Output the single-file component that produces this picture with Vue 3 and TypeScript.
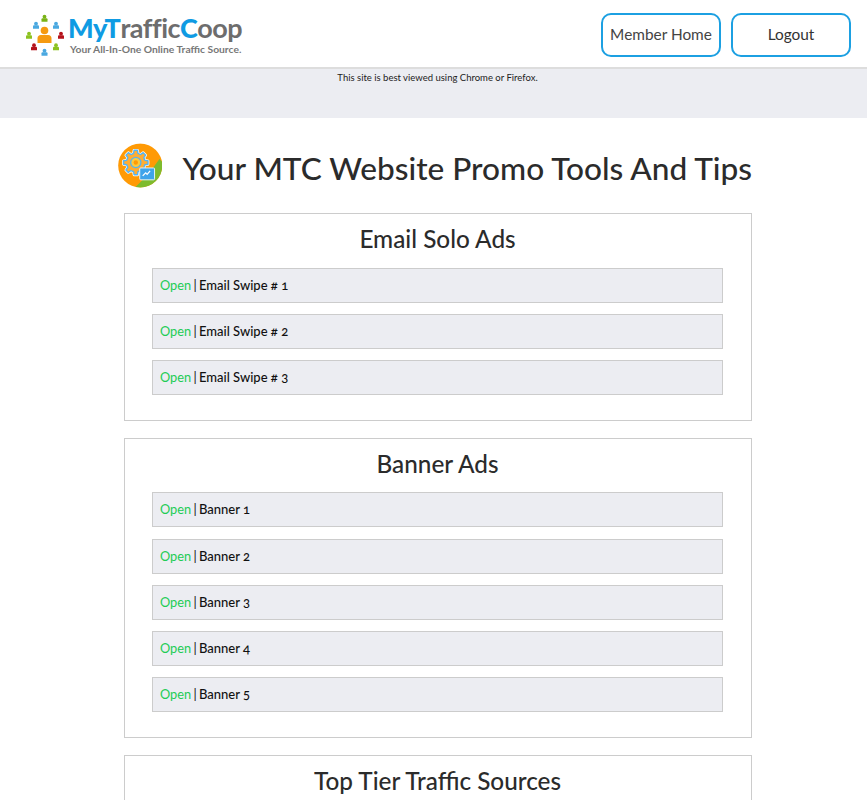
<script setup lang="ts">
interface Section {
  title: string
  items: string[]
}

const sections: Section[] = [
  { title: 'Email Solo Ads', items: ['Email Swipe # 1', 'Email Swipe # 2', 'Email Swipe # 3'] },
  { title: 'Banner Ads', items: ['Banner 1', 'Banner 2', 'Banner 3', 'Banner 4', 'Banner 5'] },
  { title: 'Top Tier Traffic Sources', items: [] },
]

// little people around the logo: x, y, colour
const people = [
  [44.5, 18.5, '#7ab317'], [56, 25.5, '#4aa8e0'], [36, 25.5, '#4aa8e0'],
  [29, 35.5, '#8cc21f'], [61, 35.5, '#b5121b'], [34, 47, '#b5121b'],
  [56, 47, '#8cc21f'], [44.5, 52.5, '#4aa8e0'],
] as [number, number, string][]

// outline of the eight-toothed gear in the heading icon
function gearPath(cx: number, cy: number, inner: number, outer: number, teeth: number) {
  const pts: string[] = []
  const step = (Math.PI * 2) / teeth
  for (let i = 0; i < teeth; i++) {
    const a = i * step
    const corners: [number, number][] = [
      [inner, a - step * 0.3], [outer, a - step * 0.18], [outer, a + step * 0.18], [inner, a + step * 0.3],
    ]
    for (const [r, t] of corners) {
      pts.push(`${(cx + r * Math.cos(t)).toFixed(2)} ${(cy + r * Math.sin(t)).toFixed(2)}`)
    }
  }
  return 'M' + pts.join('L') + 'Z'
}

const gear = gearPath(18, 19.5, 9.5, 12.5, 8)
</script>

<template>
  <div class="page">
    <header class="top">
      <div class="logo">
        <svg class="logo-icon" width="44" height="44" viewBox="24 14 44 44">
          <g v-for="(p, i) in people" :key="i" :fill="p[2]">
            <circle :cx="p[0]" :cy="p[1] - 1.8" r="1.9" />
            <path :d="`M${p[0] - 3} ${p[1] + 3.2}v-2.4q0-1 1-1h4q1 0 1 1v2.4z`" />
          </g>
          <circle cx="44.5" cy="30.5" r="3.8" fill="#f59a12" />
          <path d="M37.5 43v-4.5q0-3.6 3.4-3.6h7.2q3.4 0 3.4 3.6V43z" fill="#f59a12" />
        </svg>
        <div class="logo-text">
          <div class="logo-name"><b>My</b><b>T</b>raffic<b>C</b>oop</div>
          <div class="logo-tag">Your All-In-One Online Traffic Source.</div>
        </div>
      </div>
      <nav class="nav">
        <a class="btn">Member Home</a>
        <a class="btn dark">Logout</a>
      </nav>
    </header>

    <div class="notice">This site is best viewed using Chrome or Firefox.</div>

    <main class="main">
      <div class="heading">
        <svg class="heading-icon" width="45" height="45" viewBox="0 0 45 45">
          <defs>
            <clipPath id="disc"><circle cx="22.5" cy="22.5" r="22.3" /></clipPath>
          </defs>
          <g clip-path="url(#disc)">
            <rect width="45" height="45" fill="#ff9a05" />
            <path d="M17 45 30 32 42 16 46 20V46z" fill="#7dbb2e" />
          </g>
          <path :d="gear" fill="none" stroke="#fff" stroke-width="2.8" stroke-linejoin="round" />
          <path :d="gear" fill="#ffad33" stroke="#55b4f2" stroke-width="1.4" stroke-linejoin="round" />
          <circle cx="18" cy="19.5" r="5.2" fill="#ffc93c" stroke="#55b4f2" stroke-width="1.3" />
          <circle cx="18" cy="19.5" r="2.2" fill="#ff9a05" />
          <rect x="22" y="25" width="15" height="12" rx="1" fill="#3fa4ea" stroke="#e4f3fd" stroke-width="1" />
          <path d="M25 33l3-3 1.5 1.5 3-3.5" fill="none" stroke="#fff" stroke-width="1.3" />
        </svg>
        <h1>Your MTC Website Promo Tools And Tips</h1>
      </div>

      <section v-for="s in sections" :key="s.title" class="card">
        <h2>{{ s.title }}</h2>
        <div v-for="item in s.items" :key="item" class="row">
          <a class="open">Open</a> | <span class="label">{{ item }}</span>
        </div>
      </section>
    </main>
  </div>
</template>

<style scoped>
.page {
  height: 800px;
  overflow: hidden;
  font-family: Lato, "Open Sans", sans-serif;
  color: #222;
  background: #fff;
}

.top {
  height: 54px;
  border-bottom: 2px solid #ddd;
  display: flex;
  justify-content: space-between;
  padding: 13px 16px 0 24px;
}

.logo {
  display: flex;
}

.logo-icon {
  margin-top: 1px;
}

.logo-name {
  font-size: 27px;
  line-height: 30px;
  color: #6d6d6d;
  font-weight: 700;
  letter-spacing: -0.5px;
}

.logo-name b {
  color: #0f9be3;
}

.logo-tag {
  font-size: 10.3px;
  line-height: 12px;
  font-weight: 700;
  color: #777;
  margin-left: 2px;
}

.nav {
  display: flex;
  gap: 10px;
}

.btn {
  width: 120px;
  height: 44px;
  box-sizing: border-box;
  border: 2px solid #1ca0e2;
  border-radius: 10px;
  display: flex;
  align-items: center;
  justify-content: center;
  font-size: 15.4px;
  padding-bottom: 3px;
  color: #444;
  background: #fff;
}

.btn.dark {
  color: #333;
}

.notice {
  height: 49px;
  background: #ecedf2;
  text-align: center;
  font-size: 9.5px;
  line-height: 17px;
  color: #222;
  padding-left: 8px;
  box-sizing: border-box;
}

.main {
  width: 628px;
  margin-left: 124px;
}

.heading {
  display: flex;
  align-items: center;
  margin: 24px 0 25px -6px;
  height: 46px;
  gap: 20px;
}

h1 {
  margin: 6px 0 0;
  font-size: 31.6px;
  font-weight: 500;
  color: #2b2b2b;
  white-space: nowrap;
}

.card {
  border: 1px solid #ccc;
  padding: 9px 28px 25.5px 27px;
  margin-bottom: 16.4px;
}

h2 {
  margin: 0 0 12.6px;
  text-align: center;
  font-size: 24.3px;
  line-height: 31.4px;
  font-weight: 500;
  color: #2b2b2b;
}

h2 {
  padding-bottom: 0.6px;
}

.row {
  height: 35px;
  box-sizing: border-box;
  border: 1px solid #ccc;
  background: #ecedf2;
  padding-left: 7px;
  margin-bottom: 11.15px;
  font-size: 12.8px;
  font-variant-numeric: oldstyle-nums;
  line-height: 33px;
  color: #111;
}

.row:last-child {
  margin-bottom: 0;
}

.open {
  color: #22cc55;
  margin-right: -1px;
}

.label {
  font-size: 13px;
  font-weight: 500;
  margin-left: -1px;
}
</style>
